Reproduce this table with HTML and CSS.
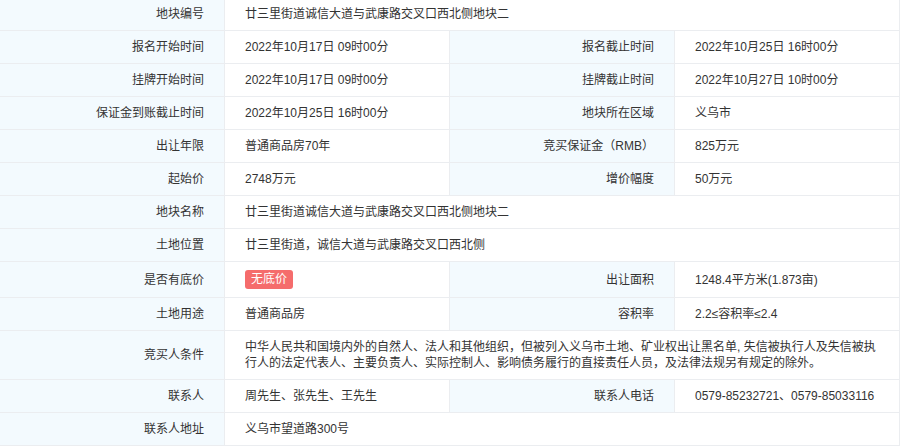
FILE: index.html
```html
<!DOCTYPE html>
<html lang="zh-CN">
<head>
<meta charset="utf-8">
<title>地块详情</title>
<link rel="stylesheet" href="styles.css">
</head>
<body>
<div class="info-grid">
  <div class="lbl">地块编号</div>
  <div class="val span3">廿三里街道诚信大道与武康路交叉口西北侧地块二</div>

  <div class="lbl">报名开始时间</div>
  <div class="val">2022年10月17日 09时00分</div>
  <div class="lbl">报名截止时间</div>
  <div class="val">2022年10月25日 16时00分</div>

  <div class="lbl">挂牌开始时间</div>
  <div class="val">2022年10月17日 09时00分</div>
  <div class="lbl">挂牌截止时间</div>
  <div class="val">2022年10月27日 10时00分</div>

  <div class="lbl">保证金到账截止时间</div>
  <div class="val">2022年10月25日 16时00分</div>
  <div class="lbl">地块所在区域</div>
  <div class="val">义乌市</div>

  <div class="lbl">出让年限</div>
  <div class="val">普通商品房70年</div>
  <div class="lbl">竞买保证金（RMB）</div>
  <div class="val">825万元</div>

  <div class="lbl">起始价</div>
  <div class="val">2748万元</div>
  <div class="lbl">增价幅度</div>
  <div class="val">50万元</div>

  <div class="lbl">地块名称</div>
  <div class="val span3">廿三里街道诚信大道与武康路交叉口西北侧地块二</div>

  <div class="lbl">土地位置</div>
  <div class="val span3">廿三里街道，诚信大道与武康路交叉口西北侧</div>

  <div class="lbl">是否有底价</div>
  <div class="val"><span class="badge">无底价</span></div>
  <div class="lbl">出让面积</div>
  <div class="val">1248.4平方米(1.873亩)</div>

  <div class="lbl">土地用途</div>
  <div class="val">普通商品房</div>
  <div class="lbl">容积率</div>
  <div class="val">2.2≤容积率≤2.4</div>

  <div class="lbl">竞买人条件</div>
  <div class="val span3 wrap">中华人民共和国境内外的自然人、法人和其他组织，但被列入义乌市土地、矿业权出让黑名单, 失信被执行人及失信被执行人的法定代表人、主要负责人、实际控制人、影响债务履行的直接责任人员，及法律法规另有规定的除外。</div>

  <div class="lbl">联系人</div>
  <div class="val">周先生、张先生、王先生</div>
  <div class="lbl">联系人电话</div>
  <div class="val">0579-85232721、0579-85033116</div>

  <div class="lbl">联系人地址</div>
  <div class="val span3">义乌市望道路300号</div>
</div>
</body>
</html>
```

FILE: styles.css
```css
html, body {
  margin: 0;
  padding: 0;
  background: #fff;
}

body {
  font-family: "Liberation Sans", "Noto Sans CJK SC", sans-serif;
  font-size: 12px;
  color: #333;
  overflow: hidden;
}

.info-grid {
  display: grid;
  grid-template-columns: repeat(4, 224px);
  gap: 1px;
  padding: 1px;
  background: #ebedf0;
  width: max-content;
  margin: -3px 0 0 -1px;
}

.lbl,
.val {
  padding: 8px 20px;
  line-height: 16px;
  display: flex;
  align-items: center;
}

.lbl {
  background: #f3fafe;
  justify-content: flex-end;
  text-align: right;
}

.val {
  background: #fff;
}

.span3 {
  grid-column: span 3;
}

.wrap {
  display: block;
  padding-right: 18px;
}

.badge {
  display: inline-block;
  background: #f56c6c;
  color: #fff;
  height: 19px;
  line-height: 19px;
  padding: 0 6px;
  border-radius: 3px;
}
```
